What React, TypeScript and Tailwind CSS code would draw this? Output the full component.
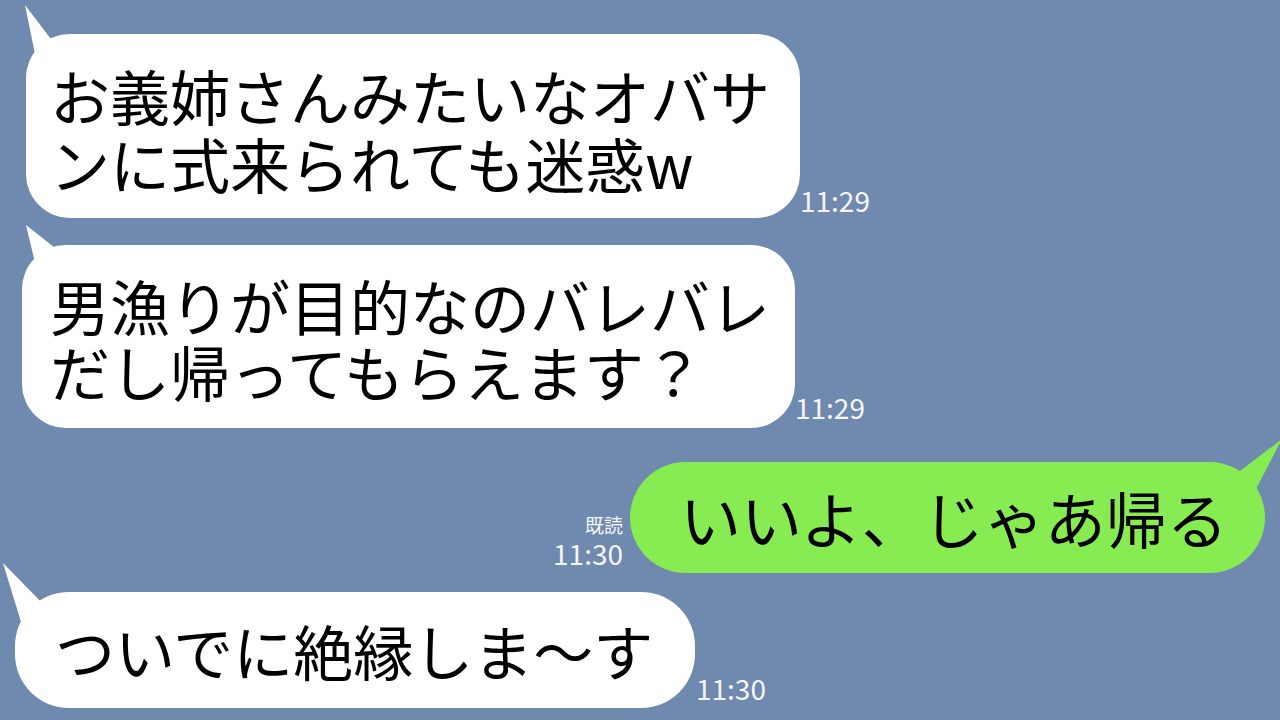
import React from "react";

const font = { fontFamily: '"Noto Sans CJK JP", "Noto Sans", sans-serif' };

function Tail({ points, color, box }: { points: string; color: string; box: string }) {
  return (
    <svg className={`absolute ${box}`} viewBox="0 0 60 60" width="60" height="60">
      <polygon points={points} fill={color} />
    </svg>
  );
}

export default function App() {
  return (
    <div
      className="w-[1280px] h-[720px] bg-[#6f89af] overflow-hidden flex flex-col text-black"
      style={font}
    >
      {/* Row 1 */}
      <div className="flex items-end ml-[26px] mt-[34px]">
        <div className="relative w-[774px] h-[184px] bg-white rounded-[44px] pl-[24px] pt-[27px] text-[60px] leading-[68px] whitespace-nowrap">
          <Tail box="left-[-6px] top-[-30px]" points="5,1 17,60 50,60" color="#ffffff" />
          <div className="relative">お義姉さんみたいなオバサ</div>
          <div className="relative">ンに式来られても迷惑w</div>
        </div>
        <div className="ml-[0px] mb-[4px] text-[28px] leading-none text-[#f4f6fa]">11:29</div>
      </div>

      {/* Row 2 */}
      <div className="flex items-end ml-[22px] mt-[27px]">
        <div className="relative w-[773px] h-[183px] bg-white rounded-[44px] pl-[28px] pt-[27px] text-[60px] leading-[66px] whitespace-nowrap">
          <Tail box="left-[-2px] top-[-30px]" points="6,10 18,60 44,40" color="#ffffff" />
          <div className="relative">男漁りが目的なのバレバレ</div>
          <div className="relative">だし帰ってもらえます？</div>
        </div>
        <div className="ml-[0px] mb-[7px] text-[28px] leading-none text-[#f4f6fa]">11:29</div>
      </div>

      {/* Row 3 */}
      <div className="flex items-end justify-end pr-[15px] mt-[34px]">
        <div className="flex flex-col items-end mr-[7px] mb-[6px] text-[#f4f6fa]">
          <div className="text-[19px] leading-none mb-[5px]">既読</div>
          <div className="text-[28px] leading-none">11:30</div>
        </div>
        <div className="relative w-[635px] h-[111px] bg-[#86ec52] rounded-[56px] pl-[50px] flex items-center text-[61px] whitespace-nowrap">
          <Tail box="right-[-21px] top-[-33px]" points="56,10 10,45 30,60" color="#86ec52" />
          <span className="relative">いいよ、じゃあ帰る</span>
        </div>
      </div>

      {/* Row 4 */}
      <div className="flex items-end ml-[15px] mt-[19px]">
        <div className="relative w-[680px] h-[116px] bg-white rounded-[54px] pl-[40px] flex items-center text-[60px] whitespace-nowrap">
          <Tail box="left-[-12px] top-[-30px]" points="0,1 18,60 48,50" color="#ffffff" />
          <span className="relative">ついでに絶縁しま～す</span>
        </div>
        <div className="ml-[1px] mb-[6px] text-[28px] leading-none text-[#f4f6fa]">11:30</div>
      </div>
    </div>
  );
}
